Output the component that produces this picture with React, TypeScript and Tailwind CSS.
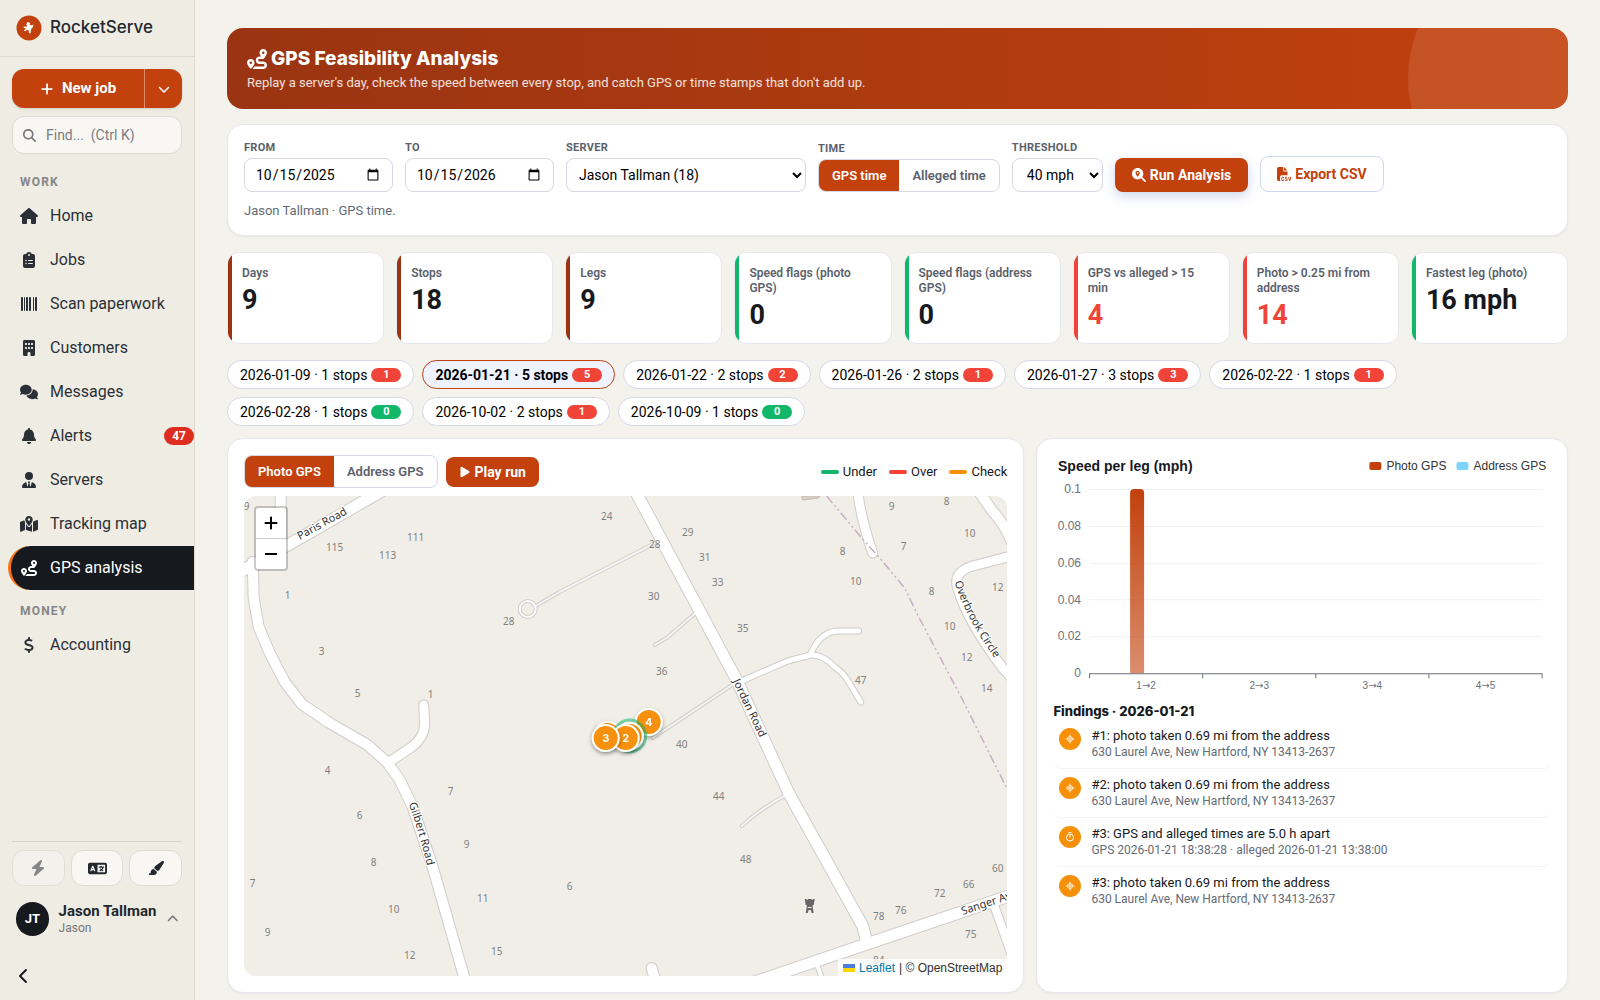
import { useState } from 'react';
import type { ReactNode } from 'react';
import type { IconType } from 'react-icons';
import {
  FaBarcode, FaBell, FaBolt, FaBuilding, FaChevronDown, FaChevronLeft, FaChevronUp, FaClipboardList,
  FaComments, FaDollarSign, FaFileCsv, FaHouse, FaLanguage, FaMagnifyingGlass, FaMagnifyingGlassLocation,
  FaMapLocationDot, FaPaintbrush, FaPlay, FaPlus, FaRoute, FaUserTie,
} from 'react-icons/fa6';
import clsx from 'clsx';

interface NavEntry { label: string; icon: IconType; badge?: number; active?: boolean; }

const WORK: NavEntry[] = [
  { label: 'Home', icon: FaHouse },
  { label: 'Jobs', icon: FaClipboardList },
  { label: 'Scan paperwork', icon: FaBarcode },
  { label: 'Customers', icon: FaBuilding },
  { label: 'Messages', icon: FaComments },
  { label: 'Alerts', icon: FaBell, badge: 47 },
  { label: 'Servers', icon: FaUserTie },
  { label: 'Tracking map', icon: FaMapLocationDot },
  { label: 'GPS analysis', icon: FaRoute, active: true },
];

const MONEY: NavEntry[] = [{ label: 'Accounting', icon: FaDollarSign }];

type Tone = 'brand' | 'good' | 'bad';

const STATS: { label: string; value: string; tone: Tone }[] = [
  { label: 'Days', value: '9', tone: 'brand' },
  { label: 'Stops', value: '18', tone: 'brand' },
  { label: 'Legs', value: '9', tone: 'brand' },
  { label: 'Speed flags (photo GPS)', value: '0', tone: 'good' },
  { label: 'Speed flags (address GPS)', value: '0', tone: 'good' },
  { label: 'GPS vs alleged > 15 min', value: '4', tone: 'bad' },
  { label: 'Photo > 0.25 mi from address', value: '14', tone: 'bad' },
  { label: 'Fastest leg (photo)', value: '16 mph', tone: 'good' },
];

const DAYS = [
  { date: '2026-01-09', stops: 1, flags: 1 },
  { date: '2026-01-21', stops: 5, flags: 5 },
  { date: '2026-01-22', stops: 2, flags: 2 },
  { date: '2026-01-26', stops: 2, flags: 1 },
  { date: '2026-01-27', stops: 3, flags: 3 },
  { date: '2026-02-22', stops: 1, flags: 1 },
  { date: '2026-02-28', stops: 1, flags: 0 },
  { date: '2026-10-02', stops: 2, flags: 1 },
  { date: '2026-10-09', stops: 1, flags: 0 },
];

const ADDRESS = '630 Laurel Ave, New Hartford, NY 13413-2637';

const FINDINGS: { kind: 'place' | 'time'; title: string; detail: string }[] = [
  { kind: 'place', title: '#1: photo taken 0.69 mi from the address', detail: ADDRESS },
  { kind: 'place', title: '#2: photo taken 0.69 mi from the address', detail: ADDRESS },
  { kind: 'time', title: '#3: GPS and alleged times are 5.0 h apart', detail: 'GPS 2026-01-21 18:38:28 · alleged 2026-01-21 13:38:00' },
  { kind: 'place', title: '#3: photo taken 0.69 mi from the address', detail: ADDRESS },
];

const NavList = ({ title, items }: { title: string; items: NavEntry[] }) => (
  <section>
    <h2 className="mb-px flex h-[22px] items-center pl-5 text-xs font-bold uppercase tracking-widest text-[#85868a]">{title}</h2>
    {items.map(({ label, icon: Icon, badge, active }) => (
      <a key={label} href="#"
        className={clsx('ml-2 flex h-11 items-center gap-3',
          active ? 'rounded-l-full border-l-3 border-[#f97316] bg-[#16191d] pl-[9px] text-white' : 'pl-3 text-[#2b3038]')}>
        <Icon className="w-[18px] shrink-0 text-base" />
        <span className="text-base">{label}</span>
        {badge && (
          <span className="ml-auto rounded-full bg-[#dc2d20] px-2 text-xs leading-[18px] font-bold text-white">{badge}</span>
        )}
      </a>
    ))}
  </section>
);

const Sidebar = () => (
  <aside className="sticky top-0 flex h-screen w-[195px] shrink-0 flex-col border-r border-[#dfdacd] bg-[#efece3]">
    <div className="flex h-[57px] shrink-0 items-center gap-2 border-b border-[#dfdacd] pl-4">
      <svg viewBox="0 0 26 26" className="size-[26px]">
        <circle cx="13" cy="13" r="12.5" fill="#c2410c" />
        <path d="M11.500 7l2.500 .8-.3 2.200 2 .3 1.800-.8-.6 2.800-1.600 1.500-.9 4.700-1.500-.5-.1-2.700-1.800-.4-2 1.300-1-.8 1.700-2-2.200-.8.300-1.200 2.600.3.800-1.300-1-.9z" fill="#fff" />
        <path d="M9 13.500l2 .3-1.500 1.400z" fill="#fdba74" />
      </svg>
      <span className="font-[Inter] text-[17px] font-medium text-[#23282f]">RocketServe</span>
    </div>
    <div className="flex flex-col gap-2 px-3 pt-3">
      <div className="flex h-[39px] overflow-hidden rounded-xl bg-[#c2410c] text-white shadow-sm">
        <button className="flex flex-1 items-center justify-center gap-2 border-r border-[#dd8d6b] text-[15px] font-bold">
          <FaPlus className="text-sm" /> New job
        </button>
        <button aria-label="More job types" className="flex w-[37px] items-center justify-center"><FaChevronDown className="text-xs" /></button>
      </div>
      <label className="flex h-[38px] items-center gap-2.5 rounded-xl border border-[#dddad2] bg-[#f8f7f3] px-2.5">
        <FaMagnifyingGlass className="size-[13px] shrink-0 text-[#73767b]" />
        <input type="search" aria-label="Find" placeholder="Find...  (Ctrl K)" className="w-full min-w-0 text-sm outline-none placeholder:whitespace-pre placeholder:text-[#7b7e83]" />
      </label>
    </div>
    <nav className="flex-1 pt-[17px]">
      <NavList title="Work" items={WORK} />
      <div className="pt-2.5"><NavList title="Money" items={MONEY} /></div>
    </nav>
    <div className="mx-3 flex gap-1.5 border-t border-[#d6d2c8] pt-2 text-[#23282f]">
      <button aria-label="Quick actions" className="flex h-9 flex-1 items-center justify-center rounded-xl border border-[#e0ddd4] bg-[#f3f1eb] text-[#85868a]"><FaBolt className="text-base" /></button>
      <button aria-label="Language" className="flex h-9 flex-1 items-center justify-center rounded-xl border border-[#dddad2] bg-[#f8f7f3]"><FaLanguage className="text-[19px]" /></button>
      <button aria-label="Theme" className="flex h-9 flex-1 items-center justify-center rounded-xl border border-[#dddad2] bg-[#f8f7f3]"><FaPaintbrush className="text-base" /></button>
    </div>
    <button className="mt-4 flex items-center gap-2.5 px-4 text-left">
      <span className="flex size-[34px] items-center justify-center rounded-full bg-[#16191d] text-[13px] font-bold text-white">JT</span>
      <span className="flex-1">
        <span className="block text-[15px] leading-[18px] font-bold whitespace-nowrap text-[#23282f]">Jason Tallman</span>
        <span className="block text-xs leading-4 text-[#73767b]">Jason</span>
      </span>
      <FaChevronUp className="text-xs text-[#73767b]" />
    </button>
    <button aria-label="Collapse sidebar" className="mt-6 mb-2 ml-4 flex size-8 items-center"><FaChevronLeft className="text-base text-[#16191d]" /></button>
  </aside>
);

const Field = ({ label, id, children }: { label: string; id: string; children: ReactNode }) => (
  <div className="flex flex-col gap-0.5">
    <label htmlFor={id} className="text-[11px] leading-4 font-bold uppercase tracking-wide text-[#5b616b]">{label}</label>
    {children}
  </div>
);

const Segmented = ({ options, value, onChange, label }: { options: string[]; value: string; onChange: (v: string) => void; label: string }) => (
  <div role="group" aria-label={label} className="flex h-[33px] overflow-hidden rounded-lg border border-[#d5d9e6] bg-white text-[13px] font-semibold">
    {options.map(o => (
      <button key={o} onClick={() => onChange(o)} aria-pressed={o === value}
        className={clsx('px-[13px] whitespace-nowrap', o === value ? 'bg-[#c2410c] text-white' : 'text-[#5b616b]')}>
        {o}
      </button>
    ))}
  </div>
);

const Filters = () => {
  const [time, setTime] = useState('GPS time');
  const control = 'h-[34px] rounded-lg border border-[#d5d9e6] bg-white text-sm text-black';
  return (
    <section className="rounded-2xl border border-[#e6e8ef] bg-white px-4 pt-[15px] pb-3.5 shadow-xs">
      <div className="flex flex-wrap items-end gap-3">
        <Field label="From" id="from"><input id="from" type="date" defaultValue="2025-10-15" className={clsx(control, 'w-[149px] px-2.5')} /></Field>
        <Field label="To" id="to"><input id="to" type="date" defaultValue="2026-10-15" className={clsx(control, 'w-[149px] px-2.5')} /></Field>
        <Field label="Server" id="server">
          <select id="server" className={clsx(control, 'w-60 pl-2')}><option>Jason Tallman (18)</option></select>
        </Field>
        <div className="flex flex-col gap-0.5">
          <span className="text-[11px] leading-4 font-bold uppercase tracking-wide text-[#5b616b]">Time</span>
          <Segmented label="Time" options={['GPS time', 'Alleged time']} value={time} onChange={setTime} />
        </div>
        <Field label="Threshold" id="threshold">
          <select id="threshold" className={clsx(control, 'w-[91px] pl-2.5')}><option>40 mph</option></select>
        </Field>
        <button className="flex h-[34px] items-center justify-center gap-1 rounded-lg bg-[#c2410c] px-[17px] text-sm font-bold text-white shadow-[0_4px_12px_rgba(59,91,180,0.25)]">
          <FaMagnifyingGlassLocation /> Run Analysis
        </button>
        <button className="flex h-9 items-center justify-center gap-1 rounded-lg border border-[#cdd8f3] bg-white px-4 text-sm font-bold text-[#c2410c]">
          <FaFileCsv /> Export CSV
        </button>
      </div>
      <p className="mt-[9px] text-[13px] leading-5 text-[#656b75]">Jason Tallman · {time}.</p>
    </section>
  );
};

const STAT_BAR: Record<Tone, string> = {
  brand: 'bg-[#9a3412]',
  good: 'bg-[#12b76a]',
  bad: 'bg-[#f04438]',
};

const StatCard = ({ label, value, tone }: { label: string; value: string; tone: Tone }) => (
  <div className="relative min-h-[92px] overflow-hidden rounded-xl border border-[#e6e8ef] bg-white pt-[13px] pr-3 pb-2 pl-3.5">
    <span className={clsx('absolute inset-y-0 left-0 w-1', STAT_BAR[tone])} />
    <p className="text-xs leading-[15px] font-semibold text-[#5b616b]">{label}</p>
    <p className={clsx('mt-1 text-[27px] leading-[30px] font-bold', tone === 'bad' ? 'text-[#f04438]' : 'text-[#16191d]')}>{value}</p>
  </div>
);

const HOUSES: [string, number, number][] = [
  ['9', 3, 10], ['115', 91, 51], ['111', 172, 41], ['113', 144, 59], ['24', 363, 20], ['1', 44, 99], ['28', 265, 125],
  ['3', 78, 155], ['5', 114, 197], ['1', 187, 198], ['29', 444, 36], ['28', 411, 48], ['31', 461, 61], ['33', 474, 86],
  ['30', 410, 100], ['35', 499, 132], ['36', 418, 175], ['47', 617, 184], ['8', 599, 55], ['10', 612, 85], ['9', 648, 10],
  ['7', 660, 50], ['8', 703, 5], ['10', 726, 37], ['8', 688, 95], ['10', 706, 130], ['12', 754, 91], ['12', 723, 161],
  ['14', 743, 192], ['4', 84, 274], ['6', 116, 319], ['8', 130, 366], ['7', 9, 387], ['10', 150, 413], ['9', 24, 436],
  ['12', 166, 459], ['7', 207, 295], ['9', 223, 348], ['11', 239, 402], ['15', 253, 455], ['6', 326, 390], ['40', 438, 248],
  ['44', 475, 300], ['48', 502, 363], ['78', 635, 420], ['76', 657, 414], ['72', 696, 397], ['66', 725, 388], ['60', 754, 372],
  ['75', 727, 438], ['84', 635, 464],
];

// [path, width of the white surface]
const ROADS: [string, number][] = [
  ['M292 110L316 96L396 55L413 46', 2],
  ['M452 117L423 142L411 149', 2],
  ['M493 186L469 202L409 242', 2],
  ['M544 298Q519 311 498 330', 2],
  ['M573 468L579 484', 4],
  ['M751 411L770 464', 8],
  ['M37 -6V45', 10],
  ['M-20 84L0 74L60 40L138 -5', 11],
  ['M9 66L10 102L15 131L26 157L41 186L58 208L86 227L124 249L144 267L156 284L169 311L189 371L223 490', 10],
  ['M144 267L168 251Q180 242 181 229L180 209', 9],
  ['M498 185L544 165L567 159Q579 158 591 171Q600 177 605 186L617 206', 5],
  ['M567 158Q576 136 594 135H615', 5],
  ['M614 -5Q617 22 629 57', 9],
  ['M734 -6L748 14Q762 30 768 46', 10],
  ['M775 58L729 70Q709 76 714 92Q724 126 759 172L775 190', 9],
  ['M408 472L412 486', 10],
  ['M390 -8L493 184L545 297L619 430L623 446', 11],
  ['M505 488L623 448L780 395', 11],
];

const Pin = ({ x, y, n }: { x: number; y: number; n?: number }) => (
  <g filter="url(#pin-shadow)">
    <circle cx={x} cy={y} r="13" fill="#f79009" stroke="#fff" strokeWidth="2" />
    {n && <text x={x} y={y + 4} textAnchor="middle" className="fill-white font-[Inter] text-[11px] font-bold">{n}</text>}
  </g>
);

const StreetMap = () => (
  <svg viewBox="0 0 764 480" preserveAspectRatio="xMidYMid slice" className="size-full bg-[#f1eee8]" role="img" aria-label="Route map">
    <defs>
      <filter id="pin-shadow" x="-30%" y="-30%" width="160%" height="170%">
        <feDropShadow dx="0" dy="2" stdDeviation="2" floodOpacity="0.35" />
      </filter>
      <path id="lbl-paris" d="M56 44L140 -2" />
      <path id="lbl-jordan" d="M489 185L560 334" />
      <path id="lbl-gilbert" d="M165 308Q175 335 183 368L195 410" />
      <path id="lbl-overbrook" d="M711 86Q724 130 770 187" />
      <path id="lbl-sanger" d="M719 419L800 392" />
    </defs>
    <path d="M558 0H576L575 2L559 4Z" fill="#d9d0c9" stroke="#c5b8ad" />
    <g fill="none" strokeLinecap="round" strokeLinejoin="round">
      {ROADS.map(([d, w]) => <path key={d} d={d} stroke="#cfcdca" strokeWidth={w + 2} />)}
      <circle cx="284" cy="113" r="8" stroke="#cfcdca" strokeWidth="4" />
      {ROADS.map(([d, w]) => <path key={d} d={d} stroke={w === 2 ? '#f7f5f2' : '#fff'} strokeWidth={w} />)}
      <circle cx="284" cy="113" r="8" stroke="#fff" strokeWidth="2" />
      <path d="M583 0L618 42L636 62L661 92L674 119L719 204L764 294" stroke="#c9adc6" strokeWidth="1.500" strokeLinecap="butt" strokeDasharray="9 3 2 3 2 3" />
    </g>
    <g textAnchor="middle" className="fill-[#80807e] font-['Noto_Sans'] text-[10px]">
      {HOUSES.map(([n, x, y]) => <text key={`${x}-${y}`} x={x} y={y + 4}>{n}</text>)}
    </g>
    <g stroke="#fff" strokeWidth="2" paintOrder="stroke" className="fill-[#333] font-['Noto_Sans'] text-[11px]">
      <text><textPath href="#lbl-paris">Paris Road</textPath></text>
      <text><textPath href="#lbl-jordan">Jordan Road</textPath></text>
      <text><textPath href="#lbl-gilbert">Gilbert Road</textPath></text>
      <text><textPath href="#lbl-overbrook">Overbrook Circle</textPath></text>
      <text><textPath href="#lbl-sanger">Sanger Avenue</textPath></text>
    </g>
    <path d="M561 403h2v1h1v-1h4v1h1v-1h2l-1 6h-1v2l1 6h-2l-1-3h-2l-1 3h-2l1-6v-2h-1zM564 411v1h4v-1z" fill="#666" fillRule="evenodd" />
    <Pin x={405} y={226} n={4} />
    <Pin x={364} y={239} />
    <circle cx="386" cy="240" r="16" fill="none" stroke="#12b76a" strokeOpacity="0.55" strokeWidth="3" />
    <Pin x={386} y={240} />
    <Pin x={382} y={242} n={2} />
    <Pin x={362} y={242} n={3} />
  </svg>
);

const MapPanel = () => {
  const [source, setSource] = useState('Photo GPS');
  return (
    <section className="rounded-2xl border border-[#e6e8ef] bg-white p-4 shadow-xs">
      <div className="mb-2 flex items-center gap-2">
        <Segmented label="Coordinates" options={['Photo GPS', 'Address GPS']} value={source} onChange={setSource} />
        <button className="flex h-[30px] items-center gap-1 rounded-lg bg-[#c2410c] px-[13px] text-sm font-bold text-white">
          <FaPlay className="text-xs" /> Play run
        </button>
        <ul className="ml-auto flex gap-3 text-[13px] text-[#16191d]">
          <li className="flex items-center gap-1"><span className="h-1 w-[18px] rounded-full bg-[#12b76a]" />Under</li>
          <li className="flex items-center gap-1"><span className="h-1 w-[18px] rounded-full bg-[#f04438]" />Over</li>
          <li className="flex items-center gap-1"><span className="h-1 w-[18px] rounded-full bg-[#f79009]" />Check</li>
        </ul>
      </div>
      <div className="relative h-[480px] overflow-hidden rounded-xl">
        <StreetMap />
        <div className="absolute top-2.5 left-2.5 flex flex-col rounded border-2 border-black/20 bg-white bg-clip-padding text-black">
          <button aria-label="Zoom in" className="flex size-[30px] items-center justify-center"><FaPlus className="text-base" /></button>
          <button aria-label="Zoom out" className="flex h-[31px] w-[30px] items-center justify-center border-t border-[#ccc]"><span className="h-0.5 w-3 bg-black" /></button>
        </div>
        <div className="absolute right-0 bottom-0 flex h-[17px] items-center gap-1 bg-white/80 px-[5px] font-['Liberation_Sans'] text-xs text-[#333]">
          <a href="#" className="flex items-center gap-1 text-[#0078a8]">
            <svg viewBox="0 0 12 8" className="h-2 w-3"><path fill="#4c7be1" d="M0 0h12v4H0z" /><path fill="#ffd500" d="M0 4h12v4H0z" /></svg>
            Leaflet
          </a>
          <span>| © OpenStreetMap</span>
        </div>
      </div>
    </section>
  );
};

const TICKS = ['0.1', '0.08', '0.06', '0.04', '0.02', '0'];
const SPEEDS = [0.1, 0, 0, 0];

const SpeedChart = () => (
  <svg viewBox="0 0 497 240" className="w-full font-['Liberation_Sans']" role="img" aria-label="Speed per leg (mph)">
    <defs>
      <linearGradient id="bar" x1="0" y1="0" x2="0" y2="1">
        <stop offset="0" stopColor="#c2410c" />
        <stop offset="1" stopColor="#c2410c" stopOpacity="0.6" />
      </linearGradient>
    </defs>
    <text x="5" y="15" className="fill-[#16191d] text-sm font-bold">Speed per leg (mph)</text>
    <rect x="316" y="6" width="12" height="8" rx="2" fill="#c2410c" />
    <text x="333" y="14" className="fill-[#333] text-xs">Photo GPS</text>
    <rect x="403" y="6" width="12" height="8" rx="2" fill="#7dd3fc" />
    <text x="420" y="14" className="fill-[#333] text-xs">Address GPS</text>
    {TICKS.map((t, i) => (
      <g key={t}>
        <text x="28" y={37 + i * 36.8} textAnchor="end" className="fill-[#6e7079] text-xs">{t}</text>
        {t !== '0' && <path d={`M36 ${Math.round(33 + i * 36.8) + 0.5}H488`} stroke="#f0f1f4" />}
      </g>
    ))}
    {SPEEDS.map((s, i) => s > 0 && (
      <path key={i} d={`M${77 + i * 113} 217V${221 - s * 1840}q0-4 4-4h6q4 0 4 4V217z`} fill="url(#bar)" />
    ))}
    <path d="M36 217.500H488M36.500 217v5M149.500 217v5M262.500 217v5M375.500 217v5M488.500 217v5" stroke="#6e7079" />
    {SPEEDS.map((_, i) => (
      <text key={i} x={93 + i * 113} y="233" textAnchor="middle" className="fill-[#6e7079] text-[10px]">
        {i + 1}<tspan className="font-['DejaVu_Sans']">→</tspan>{i + 2}
      </text>
    ))}
  </svg>
);

const FindingIcon = ({ kind }: { kind: 'place' | 'time' }) => (
  <span className="flex size-[22px] shrink-0 items-center justify-center rounded-full bg-[#f79009]">
    <svg viewBox="0 0 10 10" className="size-2.5" fill="none" stroke="#fff" strokeWidth="0.8">
      {kind === 'place'
        ? <path d="M5 .5v9M.5 5h9M5 2.500a2.500 2.500 0 1 0 0 5a2.500 2.500 0 1 0 0-5" />
        : <path strokeWidth="1" d="M5 2a3.500 3.500 0 1 0 0 7a3.500 3.500 0 1 0 0-7M5 3v2.500M3.500 .6h3" />}
    </svg>
  </span>
);

export default function App() {
  const [day, setDay] = useState('2026-01-21');
  return (
    <div className="flex min-h-screen bg-[#f4f2ec] font-[Roboto,sans-serif] text-[#16191d]">
      <Sidebar />
      <main className="min-w-0 flex-1 px-8 pt-7 pb-1.5">
        <header className="relative h-[81px] overflow-hidden rounded-2xl bg-linear-to-r from-[#9a3412] to-[#c2410c] px-5 pt-[17px] text-white">
          <span className="absolute -top-20 -right-[100px] size-[260px] rounded-full bg-white/10" />
          <h1 className="flex items-center gap-1 font-[Inter] text-[19px] leading-7 font-extrabold"><FaRoute className="text-xl" /> GPS Feasibility Analysis</h1>
          <p className="text-[13px] leading-5 text-white/85">Replay a server's day, check the speed between every stop, and catch GPS or time stamps that don't add up.</p>
        </header>
        <div className="mt-[15px]"><Filters /></div>
        <div className="mt-4 grid grid-cols-8 gap-3">
          {STATS.map(s => <StatCard key={s.label} {...s} />)}
        </div>
        <div className="mt-4 flex flex-wrap gap-2">
          {DAYS.map(d => (
            <button key={d.date} onClick={() => setDay(d.date)} aria-pressed={d.date === day}
              className={clsx('flex h-[29px] items-center gap-1 rounded-full border px-3 text-sm whitespace-nowrap text-black',
                d.date === day ? 'border-[#c2410c] bg-[#eef3ff] font-bold' : 'border-[#d5d9e6] bg-white')}>
              {d.date} · {d.stops} stops
              <span className={clsx('w-[30px] rounded-full text-[11px] leading-[14px] font-bold text-white', d.flags ? 'bg-[#f04438]' : 'bg-[#12b76a]')}>{d.flags}</span>
            </button>
          ))}
        </div>
        <div className="mt-3 grid grid-cols-[3fr_2fr] gap-3">
          <MapPanel />
          <section className="rounded-2xl border border-[#e6e8ef] bg-white px-4 pt-[17px] pb-4 shadow-xs">
            <SpeedChart />
            <h2 className="mt-1.5 font-[Inter] text-[13px] leading-[18px] font-extrabold">Findings · {day}</h2>
            <ul>
              {FINDINGS.map((f, i) => (
                <li key={i} className="flex h-[49px] gap-2.5 rounded-lg border-b border-[#f2f3f6] px-1.5 pt-2 last:border-0">
                  <FindingIcon kind={f.kind} />
                  <div>
                    <p className="text-[13px] leading-4 text-[#16191d]">{f.title}</p>
                    <p className="text-xs leading-4 text-[#656b75]">{f.detail}</p>
                  </div>
                </li>
              ))}
            </ul>
          </section>
        </div>
      </main>
    </div>
  );
}
